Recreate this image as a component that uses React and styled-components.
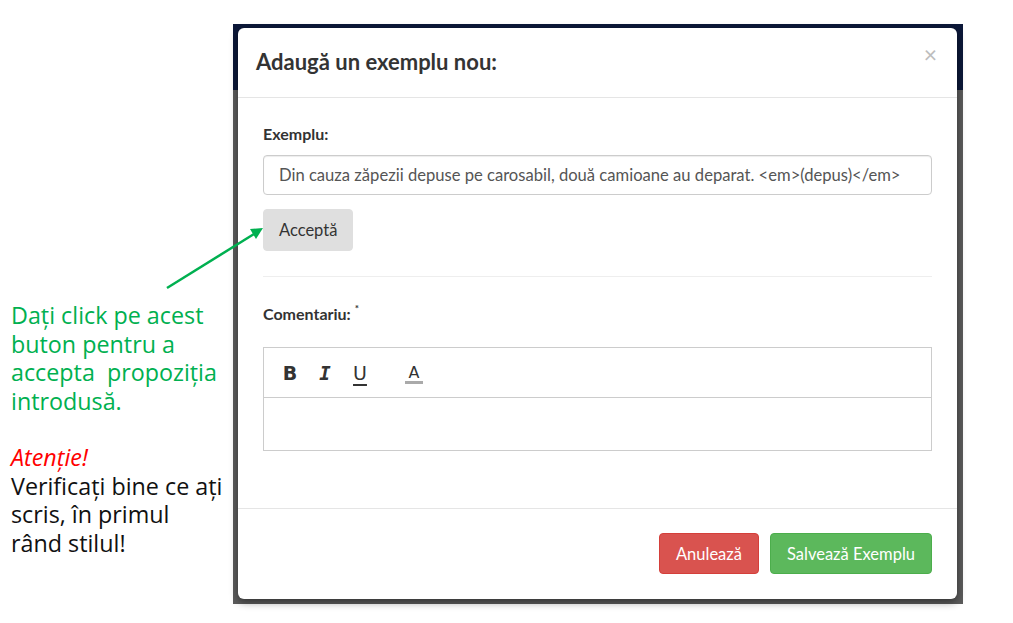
import { createGlobalStyle, styled } from "styled-components";

const GlobalStyle = createGlobalStyle`
  html, body {
    margin: 0;
    padding: 0;
    background: #fff;
  }
  body {
    width: 1013px;
    height: 623px;
    overflow: hidden;
    font-family: "Open Sans", "Noto Sans", sans-serif;
  }
`;

const Slide = styled.div`
  position: relative;
  display: flex;
  width: 1013px;
  height: 623px;
`;

const Notes = styled.div`
  width: 233px;
  flex-shrink: 0;
  box-sizing: border-box;
  padding: 301px 0 0 11px;
  font-family: "Open Sans", "Noto Sans", sans-serif;
  font-size: 23.3px;
  line-height: 28.5px;
`;

const Hint = styled.p`
  margin: 0 0 28px;
  color: #00b050;
`;

const Warning = styled.p`
  margin: 0;
  color: #111;
`;

const WarnTitle = styled.em`
  display: block;
  color: #ff0000;
`;

const Shot = styled.div`
  margin-top: 24px;
  width: 730px;
  height: 580px;
  box-sizing: border-box;
  padding: 4px 6px 5px 5px;
  background: linear-gradient(#0c1839 0 66px, #5c5c5c 66px);
`;

const Modal = styled.div`
  display: flex;
  flex-direction: column;
  height: 100%;
  background: #fff;
  border-radius: 6px;
  box-shadow: 0 3px 8px rgba(0, 0, 0, 0.45);
  font-family: "Lato", "Liberation Sans", sans-serif;
  color: #333;
`;

const Header = styled.div`
  display: flex;
  align-items: center;
  justify-content: space-between;
  height: 69px;
  padding: 0 20px 0 18px;
  border-bottom: 1px solid #e5e5e5;
  flex-shrink: 0;
`;

const Title = styled.h4`
  margin: 0 0 2px;
  font-size: 22px;
  font-weight: 700;
  color: #333;
`;

const Close = styled.span`
  font-size: 23px;
  line-height: 1;
  color: #bdbdbd;
  margin-top: -16px;
`;

const Body = styled.div`
  flex: 1;
  padding: 26px 25px 0;
`;

const Label = styled.div`
  font-size: 16px;
  line-height: 20px;
  font-weight: 700;
  color: #333;
  margin-bottom: ${(p) => p.$gap}px;

  sup {
    font-size: 10px;
    line-height: 0;
    margin-left: 4px;
    vertical-align: baseline;
    position: relative;
    top: -8px;
  }
`;

const Input = styled.div`
  display: flex;
  align-items: center;
  height: 40px;
  box-sizing: border-box;
  padding: 0 15px;
  border: 1px solid #ccc;
  border-radius: 4px;
  box-shadow: inset 0 1px 1px rgba(0, 0, 0, 0.075);
  font-size: 16.6px;
  color: #555;
  white-space: nowrap;
`;

const Button = styled.button`
  height: ${(p) => p.$h || 41}px;
  padding: 0 ${(p) => p.$px || 16}px;
  border-radius: 4px;
  border: 1px solid ${(p) => p.$border};
  background: ${(p) => p.$bg};
  color: ${(p) => p.$color};
  font-family: "Lato", "Liberation Sans", sans-serif;
  font-size: 16.5px;
`;

const AcceptRow = styled.div`
  margin-top: 14px;
`;

const Rule = styled.hr`
  margin: 25px 0 27px;
  border: 0;
  border-top: 1px solid #eee;
`;

const Editor = styled.div`
  border: 1px solid #ccc;
  height: 104px;
  box-sizing: border-box;
  display: flex;
  flex-direction: column;
`;

const Toolbar = styled.div`
  display: flex;
  align-items: center;
  height: 50px;
  box-sizing: border-box;
  padding-left: 17px;
  gap: 17px;
  border-bottom: 1px solid #ccc;
  flex-shrink: 0;
`;

const Tool = styled.span`
  font-family: ${(p) => (p.$italic ? '"DejaVu Sans Mono", monospace' : '"DejaVu Sans", sans-serif')};
  font-size: ${(p) => (p.$bar ? 16 : 19)}px;
  font-weight: ${(p) => (p.$bold ? 700 : 400)};
  font-style: ${(p) => (p.$italic ? "italic" : "normal")};
  color: #333;
  width: 18px;
  text-align: center;
  margin-left: ${(p) => p.$ml || 0}px;
  text-decoration: ${(p) => (p.$underline ? "underline" : "none")};
  text-underline-offset: 4px;
  text-decoration-thickness: 2px;
  border-bottom: ${(p) => (p.$bar ? "3px solid #aaa" : "none")};
  line-height: ${(p) => (p.$bar ? "17px" : "normal")};
  margin-top: ${(p) => (p.$bar ? 2 : 0)}px;
`;

const Footer = styled.div`
  display: flex;
  justify-content: flex-end;
  gap: 11px;
  padding: 24px 25px 25px;
  border-top: 1px solid #e5e5e5;
`;

const Arrow = styled.svg`
  position: absolute;
  left: 0;
  top: 0;
  pointer-events: none;
`;

export default function App() {
  return (
    <>
      <GlobalStyle />
      <Slide>
        <Notes>
          <Hint>
            Dați click pe acest
            <br />
            buton pentru a
            <br />
            accepta&nbsp; propoziția
            <br />
            introdusă.
          </Hint>
          <Warning>
            <WarnTitle>Atenție!</WarnTitle>
            Verificați bine ce ați
            <br />
            scris, în primul
            <br />
            rând stilul!
          </Warning>
        </Notes>
        <Shot>
          <Modal>
            <Header>
              <Title>Adaugă un exemplu nou:</Title>
              <Close>×</Close>
            </Header>
            <Body>
              <Label $gap={11}>Exemplu:</Label>
              <Input>
                Din cauza zăpezii depuse pe carosabil, două camioane au deparat. &lt;em&gt;(depus)&lt;/em&gt;
              </Input>
              <AcceptRow>
                <Button $h={42} $px={15} $bg="#dfdfdf" $border="#dfdfdf" $color="#333">
                  Acceptă
                </Button>
              </AcceptRow>
              <Rule />
              <Label $gap={23}>
                Comentariu:<sup>*</sup>
              </Label>
              <Editor>
                <Toolbar>
                  <Tool $bold>B</Tool>
                  <Tool $italic $bold>I</Tool>
                  <Tool $underline>U</Tool>
                  <Tool $bar $ml={19}>A</Tool>
                </Toolbar>
              </Editor>
            </Body>
            <Footer>
              <Button $px={16} $bg="#d9534f" $border="#d43f3a" $color="#fff">
                Anulează
              </Button>
              <Button $px={16} $bg="#5cb85c" $border="#4cae4c" $color="#fff">
                Salvează Exemplu
              </Button>
            </Footer>
          </Modal>
        </Shot>
        <Arrow width="1013" height="623" viewBox="0 0 1013 623">
          <line x1="167" y1="288" x2="254" y2="234" stroke="#00b050" strokeWidth="2.5" />
          <polygon points="263,228 250,229 256,239" fill="#00b050" />
        </Arrow>
      </Slide>
    </>
  );
}
